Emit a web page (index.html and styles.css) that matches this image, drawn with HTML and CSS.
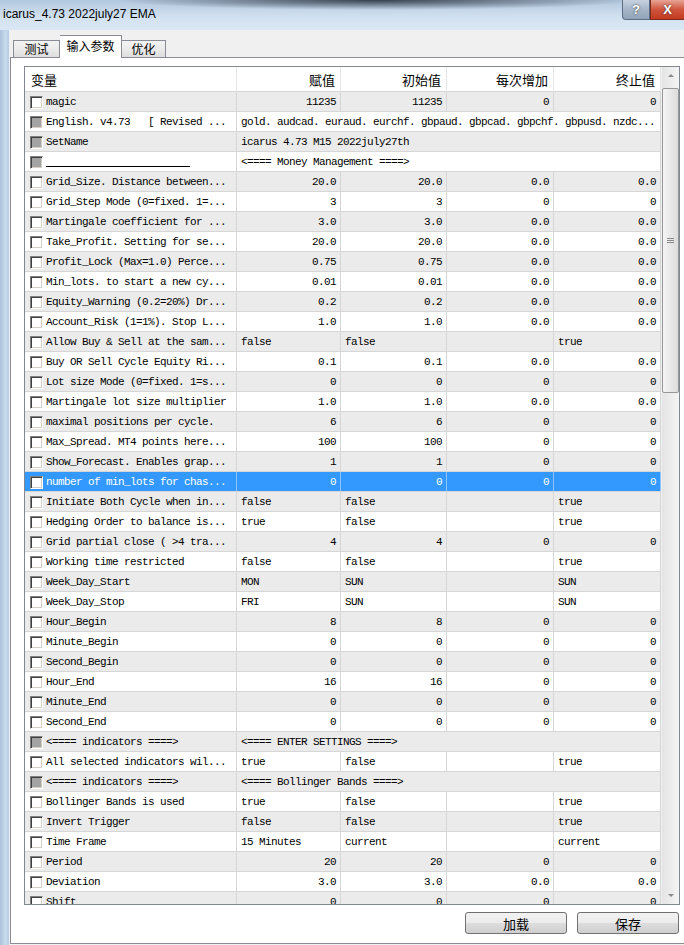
FILE: index.html
```html
<html lang="zh-CN">
<head>
  <meta charset="UTF-8" />
  <title>icarus_4.73 2022july27 EMA</title>
  <link rel="stylesheet" href="styles.css">
</head>
<body>
  <div class="titlebar">
    <span class="title">icarus_4.73 2022july27 EMA</span>
    <div class="caption">
      <span class="cap help">?</span>
      <span class="cap close">X</span>
    </div>
  </div>
  <div class="frame">
    <div class="edge"></div>
    <div class="client">
      <div class="tabs">
        <div class="tab first">测试</div>
        <div class="tab active">输入参数</div>
        <div class="tab">优化</div>
      </div>
      <div class="panel">
        <div class="listbox">
          <div class="grid">
            <div class="head">
              <div class="h left">变量</div>
              <div class="h">赋值</div>
              <div class="h">初始值</div>
              <div class="h">每次增加</div>
              <div class="h">终止值</div>
            </div>
            <div class="rows">
              <div class="row"><div class="name"><span class="chk"></span>magic</div><div class="n">11235</div><div class="n">11235</div><div class="n">0</div><div class="n">0</div></div>
              <div class="row"><div class="name"><span class="chk off"></span>English. v4.73   [ Revised ...</div><div class="w">gold. audcad. euraud. eurchf. gbpaud. gbpcad. gbpchf. gbpusd. nzdc...</div></div>
              <div class="row"><div class="name"><span class="chk off"></span>SetName</div><div class="w">icarus 4.73 M15 2022july27th</div></div>
              <div class="row"><div class="name"><span class="chk off"></span><u>                        </u></div><div class="w">&lt;==== Money Management ====&gt;</div></div>
              <div class="row"><div class="name"><span class="chk"></span>Grid_Size. Distance between...</div><div class="n">20.0</div><div class="n">20.0</div><div class="n">0.0</div><div class="n">0.0</div></div>
              <div class="row"><div class="name"><span class="chk"></span>Grid_Step Mode (0=fixed. 1=...</div><div class="n">3</div><div class="n">3</div><div class="n">0</div><div class="n">0</div></div>
              <div class="row"><div class="name"><span class="chk"></span>Martingale coefficient for ...</div><div class="n">3.0</div><div class="n">3.0</div><div class="n">0.0</div><div class="n">0.0</div></div>
              <div class="row"><div class="name"><span class="chk"></span>Take_Profit. Setting for se...</div><div class="n">20.0</div><div class="n">20.0</div><div class="n">0.0</div><div class="n">0.0</div></div>
              <div class="row"><div class="name"><span class="chk"></span>Profit_Lock (Max=1.0) Perce...</div><div class="n">0.75</div><div class="n">0.75</div><div class="n">0.0</div><div class="n">0.0</div></div>
              <div class="row"><div class="name"><span class="chk"></span>Min_lots. to start a new cy...</div><div class="n">0.01</div><div class="n">0.01</div><div class="n">0.0</div><div class="n">0.0</div></div>
              <div class="row"><div class="name"><span class="chk"></span>Equity_Warning (0.2=20%) Dr...</div><div class="n">0.2</div><div class="n">0.2</div><div class="n">0.0</div><div class="n">0.0</div></div>
              <div class="row"><div class="name"><span class="chk"></span>Account_Risk (1=1%). Stop L...</div><div class="n">1.0</div><div class="n">1.0</div><div class="n">0.0</div><div class="n">0.0</div></div>
              <div class="row"><div class="name"><span class="chk"></span>Allow Buy &amp; Sell at the sam...</div><div class="t">false</div><div class="t">false</div><div></div><div class="t">true</div></div>
              <div class="row"><div class="name"><span class="chk"></span>Buy OR Sell Cycle Equity Ri...</div><div class="n">0.1</div><div class="n">0.1</div><div class="n">0.0</div><div class="n">0.0</div></div>
              <div class="row"><div class="name"><span class="chk"></span>Lot size Mode (0=fixed. 1=s...</div><div class="n">0</div><div class="n">0</div><div class="n">0</div><div class="n">0</div></div>
              <div class="row"><div class="name"><span class="chk"></span>Martingale lot size multiplier</div><div class="n">1.0</div><div class="n">1.0</div><div class="n">0.0</div><div class="n">0.0</div></div>
              <div class="row"><div class="name"><span class="chk"></span>maximal positions per cycle.</div><div class="n">6</div><div class="n">6</div><div class="n">0</div><div class="n">0</div></div>
              <div class="row"><div class="name"><span class="chk"></span>Max_Spread. MT4 points here...</div><div class="n">100</div><div class="n">100</div><div class="n">0</div><div class="n">0</div></div>
              <div class="row"><div class="name"><span class="chk"></span>Show_Forecast. Enables grap...</div><div class="n">1</div><div class="n">1</div><div class="n">0</div><div class="n">0</div></div>
              <div class="row selected"><div class="name"><span class="chk"></span>number of min_lots for chas...</div><div class="n">0</div><div class="n">0</div><div class="n">0</div><div class="n">0</div></div>
              <div class="row"><div class="name"><span class="chk"></span>Initiate Both Cycle when in...</div><div class="t">false</div><div class="t">false</div><div></div><div class="t">true</div></div>
              <div class="row"><div class="name"><span class="chk"></span>Hedging Order to balance is...</div><div class="t">true</div><div class="t">false</div><div></div><div class="t">true</div></div>
              <div class="row"><div class="name"><span class="chk"></span>Grid partial close ( &gt;4 tra...</div><div class="n">4</div><div class="n">4</div><div class="n">0</div><div class="n">0</div></div>
              <div class="row"><div class="name"><span class="chk"></span>Working time restricted</div><div class="t">false</div><div class="t">false</div><div></div><div class="t">true</div></div>
              <div class="row"><div class="name"><span class="chk"></span>Week_Day_Start</div><div class="t">MON</div><div class="t">SUN</div><div></div><div class="t">SUN</div></div>
              <div class="row"><div class="name"><span class="chk"></span>Week_Day_Stop</div><div class="t">FRI</div><div class="t">SUN</div><div></div><div class="t">SUN</div></div>
              <div class="row"><div class="name"><span class="chk"></span>Hour_Begin</div><div class="n">8</div><div class="n">8</div><div class="n">0</div><div class="n">0</div></div>
              <div class="row"><div class="name"><span class="chk"></span>Minute_Begin</div><div class="n">0</div><div class="n">0</div><div class="n">0</div><div class="n">0</div></div>
              <div class="row"><div class="name"><span class="chk"></span>Second_Begin</div><div class="n">0</div><div class="n">0</div><div class="n">0</div><div class="n">0</div></div>
              <div class="row"><div class="name"><span class="chk"></span>Hour_End</div><div class="n">16</div><div class="n">16</div><div class="n">0</div><div class="n">0</div></div>
              <div class="row"><div class="name"><span class="chk"></span>Minute_End</div><div class="n">0</div><div class="n">0</div><div class="n">0</div><div class="n">0</div></div>
              <div class="row"><div class="name"><span class="chk"></span>Second_End</div><div class="n">0</div><div class="n">0</div><div class="n">0</div><div class="n">0</div></div>
              <div class="row"><div class="name"><span class="chk off"></span>&lt;==== indicators ====&gt;</div><div class="w">&lt;==== ENTER SETTINGS ====&gt;</div></div>
              <div class="row"><div class="name"><span class="chk"></span>All selected indicators wil...</div><div class="t">true</div><div class="t">false</div><div></div><div class="t">true</div></div>
              <div class="row"><div class="name"><span class="chk off"></span>&lt;==== indicators ====&gt;</div><div class="w">&lt;==== Bollinger Bands ====&gt;</div></div>
              <div class="row"><div class="name"><span class="chk"></span>Bollinger Bands is used</div><div class="t">true</div><div class="t">false</div><div></div><div class="t">true</div></div>
              <div class="row"><div class="name"><span class="chk"></span>Invert Trigger</div><div class="t">false</div><div class="t">false</div><div></div><div class="t">true</div></div>
              <div class="row"><div class="name"><span class="chk"></span>Time Frame</div><div class="t">15 Minutes</div><div class="t">current</div><div></div><div class="t">current</div></div>
              <div class="row"><div class="name"><span class="chk"></span>Period</div><div class="n">20</div><div class="n">20</div><div class="n">0</div><div class="n">0</div></div>
              <div class="row"><div class="name"><span class="chk"></span>Deviation</div><div class="n">3.0</div><div class="n">3.0</div><div class="n">0.0</div><div class="n">0.0</div></div>
              <div class="row"><div class="name"><span class="chk"></span>Shift</div><div class="n">0</div><div class="n">0</div><div class="n">0</div><div class="n">0</div></div>
            </div>
          </div>
          <div class="scrollbar">
            <div class="sb-btn"><span class="arrow up"></span></div>
            <div class="track">
              <div class="thumb"><span class="grip"></span></div>
            </div>
            <div class="sb-btn"><span class="arrow down"></span></div>
          </div>
        </div>
        <div class="buttons">
          <button class="btn">加载</button>
          <button class="btn">保存</button>
        </div>
      </div>
    </div>
  </div>
</body>
</html>
```

FILE: styles.css
```css
* {
  box-sizing: border-box;
  margin: 0;
  padding: 0;
}

body {
  width: 684px;
  height: 945px;
  overflow: hidden;
  background-color: #b9cfe6;
  font-family: "Liberation Mono", monospace;
}

/* window caption */
.titlebar {
  height: 30px;
  display: flex;
  justify-content: space-between;
  background:
    radial-gradient(ellipse 260px 10px at 55% 0, rgba(30, 40, 52, 0.85), rgba(30, 40, 52, 0) 100%),
    linear-gradient(#b3c8de, #d3e2f1 60%, #dbe7f4);
}

.title {
  font: 12px "Liberation Sans", sans-serif;
  color: #000;
  padding: 7px 0 0 3px;
}

.caption {
  display: flex;
  align-items: flex-start;
}

.cap {
  height: 20px;
  display: flex;
  align-items: center;
  justify-content: center;
  font: bold 13px "Liberation Sans", sans-serif;
  color: #fff;
  text-shadow: 0 0 2px #333;
}

.help {
  width: 28px;
  border: 1px solid #5b6e84;
  border-top: none;
  border-radius: 0 0 0 4px;
  background: linear-gradient(#c6d2df, #a6b6c8 50%, #90a3b8);
}

.close {
  width: 34px;
  border: 1px solid #7a2a1c;
  border-top: none;
  border-right: none;
  background: linear-gradient(#e8a495, #d0553d 50%, #c23a1f);
}

/* window body */
.frame {
  display: flex;
  height: 915px;
}

.edge {
  width: 9px;
  background: linear-gradient(to right, #a9c2dc, #c8dbee 60%, #b6cce3);
}

.client {
  flex: 1;
  display: flex;
  flex-direction: column;
  background-color: #f0f0f0;
  padding-top: 5px;
}

.tabs {
  display: flex;
  align-items: flex-end;
  height: 22px;
  padding-left: 4px;
  position: relative;
  z-index: 1;
}

.tab {
  height: 17px;
  width: 44px;
  border: 1px solid #898c95;
  border-bottom: none;
  border-left: none;
  background: linear-gradient(#f3f3f3, #ebebeb 50%, #dddddd);
  font: 12px "Noto Sans CJK SC", sans-serif;
  line-height: 15px;
  text-align: center;
  color: #000;
}

.tab.first {
  width: 47px;
  border-left: 1px solid #898c95;
}

.tab.active {
  width: 62px;
  height: 23px;
  margin-bottom: -1px;
  background: #fff;
  border-left: none;
  line-height: 20px;
}

.panel {
  flex: 1;
  margin: 0 0 1px 1px;
  background-color: #fff;
  border: 1px solid #898c95;
  border-right: none;
  padding: 8px 0 0 13px;
}

/* parameter list */
.listbox {
  width: 656px;
  height: 839px;
  border: 1px solid #828790;
  display: flex;
  overflow: hidden;
}

.grid {
  width: 636px;
}

.head {
  display: grid;
  grid-template-columns: 212px 104px 106px 107px 107px;
  height: 25px;
  border-bottom: 1px solid #d5d5d5;
}

.h {
  font: 13px "Noto Sans CJK SC", sans-serif;
  line-height: 24px;
  padding-top: 1px;
  text-align: right;
  padding-right: 5px;
  border-right: 1px solid #e5e5e5;
  color: #000;
}

.h.left {
  text-align: left;
  padding-left: 6px;
}

.row {
  display: grid;
  grid-template-columns: 212px 104px 106px 107px 107px;
  height: 20px;
  border-bottom: 1px solid #d6d6d6;
  background-color: #fff;
  font-size: 11px;
  letter-spacing: -0.6px;
  color: #000;
}

.rows .row:nth-child(odd) {
  background-color: #ebebeb;
}

.rows .row.selected {
  background-color: #3399ff;
  color: #fff;
}

.row > div {
  border-right: 1px solid #d6d6d6;
  padding-top: 2px;
  line-height: 17px;
  white-space: pre;
  overflow: hidden;
}

.row.selected > div {
  border-right-color: #8cc4ff;
}

.row .name {
  display: flex;
  align-items: center;
  gap: 3px;
  padding-left: 5px;
}

.row .n {
  text-align: right;
  padding-right: 4px;
}

.row .t {
  padding-left: 4px;
}

.row .w {
  grid-column: 2 / 6;
  padding-left: 4px;
}

.row u {
  text-decoration: underline;
}

/* classic sunken check box */
.chk {
  flex: none;
  width: 13px;
  height: 13px;
  margin-bottom: 1px;
  background-color: #fff;
  border-top: 1px solid #808080;
  border-left: 1px solid #808080;
  border-right: 1px solid #fff;
  border-bottom: 1px solid #fff;
  box-shadow: inset 1px 1px 0 #404040, inset -1px -1px 0 #d4d0c8;
}

.chk.off {
  background-color: #a3a3a3;
}

/* vertical scroll bar */
.scrollbar {
  width: 18px;
  display: flex;
  flex-direction: column;
  border-left: 1px solid #f0f0f0;
  background: linear-gradient(to right, #e4e4e4, #f4f4f4);
}

.sb-btn {
  height: 17px;
  display: flex;
  align-items: center;
  justify-content: center;
}

.arrow {
  width: 0;
  height: 0;
  border-left: 3px solid transparent;
  border-right: 3px solid transparent;
}

.arrow.up {
  border-bottom: 3px solid #8a8a8a;
}

.arrow.down {
  border-top: 3px solid #8a8a8a;
}

.track {
  flex: 1;
  padding-top: 4px;
}

.thumb {
  height: 305px;
  border: 1px solid #979797;
  border-radius: 2px;
  background: linear-gradient(to right, #f4f4f4, #e8e8e8 50%, #dcdcdc);
  display: flex;
  align-items: center;
  justify-content: center;
}

.grip {
  width: 7px;
  height: 5px;
  border-top: 1px solid #8a8a8a;
  border-bottom: 1px solid #8a8a8a;
  background: linear-gradient(transparent 1px, #8a8a8a 1px, #8a8a8a 2px, transparent 2px);
}

/* load / save */
.buttons {
  width: 656px;
  display: flex;
  justify-content: flex-end;
  gap: 10px;
  padding-right: 1px;
  margin-top: 7px;
}

.btn {
  width: 102px;
  height: 22px;
  border: 1px solid #707070;
  border-radius: 3px;
  background: linear-gradient(#f2f2f2, #ebebeb 50%, #dddddd 51%, #cfcfcf);
  font: 13px "Noto Sans CJK SC", sans-serif;
  color: #000;
}
```
